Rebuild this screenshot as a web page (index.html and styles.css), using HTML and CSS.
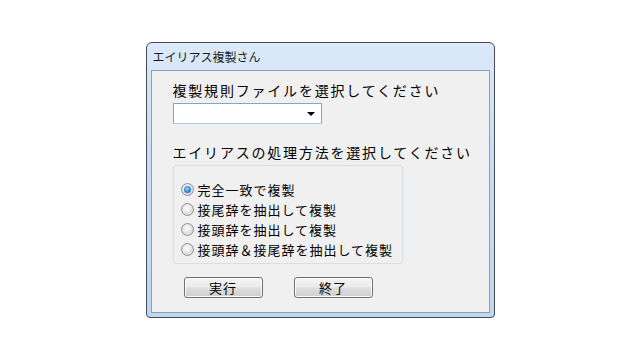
FILE: index.html
```html
<!DOCTYPE html>
<html>

<head>
  <meta charset="utf-8" />
  <title>エイリアス複製さん</title>
  <link rel="stylesheet" href="styles.css">
</head>

<body>
  <div class="window">
    <div class="title-bar">エイリアス複製さん</div>
    <div class="client">
      <div class="label">複製規則ファイルを選択してください</div>
      <div class="combo"><span class="combo-arrow"></span></div>
      <div class="label label-second">エイリアスの処理方法を選択してください</div>
      <div class="group">
        <div class="radio-row"><span class="radio checked"></span>完全一致で複製</div>
        <div class="radio-row"><span class="radio"></span>接尾辞を抽出して複製</div>
        <div class="radio-row"><span class="radio"></span>接頭辞を抽出して複製</div>
        <div class="radio-row"><span class="radio"></span>接頭辞＆接尾辞を抽出して複製</div>
      </div>
      <div class="button-row">
        <div class="button">実行</div>
        <div class="button">終了</div>
      </div>
    </div>
  </div>
</body>

</html>
```

FILE: styles.css
```css
body {
  padding: 0;
  margin: 0;
  height: 100vh;
  display: flex;
  align-items: center;
  justify-content: center;
  background-color: #ffffff;
  font-family: "Noto Sans CJK JP", "Noto Sans", sans-serif;
  color: #000000;
}

.window {
  box-sizing: border-box;
  width: 349px;
  height: 276px;
  display: flex;
  flex-direction: column;
  padding: 0 4px 4px 4px;
  border: 1px solid #464b52;
  border-radius: 6px 6px 4px 4px;
  background: linear-gradient(#dbe9f9, #c8ddf4 40%, #bfd7f1);
}

.title-bar {
  height: 27px;
  display: flex;
  align-items: center;
  padding-left: 2px;
  font-size: 12px;
  color: #1b1b1b;
}

.client {
  flex: 1;
  padding: 10px 0 0 21px;
  border: 1px solid #8d9fb5;
  background-color: #f0f0f0;
}

.label {
  height: 18px;
  line-height: 18px;
  font-size: 14px;
  letter-spacing: 1.8px;
  white-space: nowrap;
}

.label-second {
  margin-top: 19px;
}

.combo {
  box-sizing: border-box;
  width: 149px;
  height: 21px;
  margin-top: 4px;
  display: flex;
  align-items: center;
  justify-content: flex-end;
  padding-right: 6px;
  border: 1px solid #7ba7d6;
  border-bottom-color: #a9cbe8;
  background-color: #ffffff;
}

.combo-arrow {
  width: 0;
  height: 0;
  border-left: 4px solid transparent;
  border-right: 4px solid transparent;
  border-top: 4px solid #000000;
}

.group {
  box-sizing: border-box;
  width: 230px;
  height: 99px;
  margin-top: 4px;
  padding: 13px 0 0 7px;
  border: 1px solid #d5dfe5;
  border-radius: 3px;
}

.radio-row {
  height: 20px;
  display: flex;
  align-items: center;
  font-size: 13px;
  letter-spacing: 1px;
  white-space: nowrap;
}

.radio {
  box-sizing: border-box;
  width: 13px;
  height: 13px;
  margin-right: 4px;
  border: 1px solid #8f9398;
  border-radius: 50%;
  background: radial-gradient(circle at 45% 40%, #ffffff, #e6e6e6 45%, #c8c8c8);
  display: flex;
  align-items: center;
  justify-content: center;
}

.radio.checked::after {
  content: "";
  width: 7px;
  height: 7px;
  border-radius: 50%;
  background: radial-gradient(circle at 45% 40%, #8ed8ff, #2f86d6 55%, #0f4e9c);
}

.button-row {
  display: flex;
  gap: 31px;
  margin-top: 13px;
  padding-left: 11px;
}

.button {
  box-sizing: border-box;
  width: 79px;
  height: 21px;
  display: flex;
  align-items: center;
  justify-content: center;
  font-size: 13px;
  letter-spacing: 1px;
  border: 1px solid #707070;
  border-radius: 3px;
  background: linear-gradient(#f4f4f4, #ebebeb 48%, #dddddd 52%, #cfcfcf);
  box-shadow: inset 0 0 0 1px #fbfbfb;
}
```
